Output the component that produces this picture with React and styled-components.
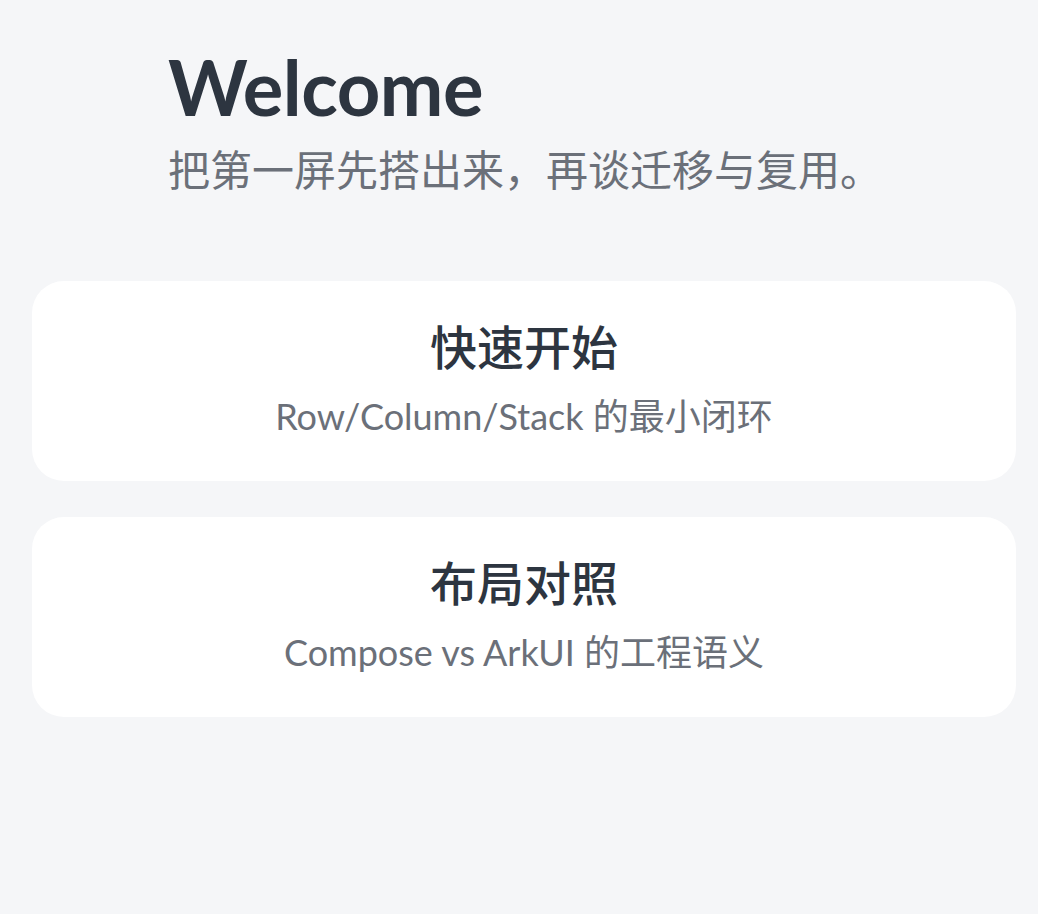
import React from 'react'
import styled, { createGlobalStyle } from 'styled-components'

const GlobalStyle = createGlobalStyle`
  html, body {
    margin: 0;
    padding: 0;
    background: #f5f6f8;
  }
  body {
    font-family: "Lato", "Noto Sans CJK SC", sans-serif;
  }
`

const Page = styled.div`
  min-height: 914px;
  box-sizing: border-box;
  background: #f5f6f8;
  padding: 40px 22px 0 32px;
  display: flex;
  flex-direction: column;
`

const Header = styled.header`
  padding-left: 136px;
  display: flex;
  flex-direction: column;
`

const Title = styled.h1`
  margin: 0;
  font-family: "Lato", sans-serif;
  font-weight: 700;
  font-size: 76px;
  line-height: 94px;
  color: #2d3540;
  letter-spacing: -0.5px;
`

const Subtitle = styled.p`
  margin: 6px 0 0;
  font-family: "Noto Sans CJK SC", sans-serif;
  font-size: 42px;
  line-height: 56px;
  color: #6b7079;
`

const CardList = styled.div`
  margin-top: 85px;
  display: flex;
  flex-direction: column;
  gap: 36px;
`

const Card = styled.section`
  height: 200px;
  box-sizing: border-box;
  padding-bottom: 8px;
  border-radius: 32px;
  background: #ffffff;
  display: flex;
  flex-direction: column;
  align-items: center;
  justify-content: center;
`

const CardTitle = styled.h2`
  margin: 0;
  font-family: "Noto Sans CJK SC", sans-serif;
  font-weight: 500;
  font-size: 47px;
  line-height: 60px;
  color: #2d3540;
`

const CardText = styled.p`
  margin: 18px 0 0;
  font-family: "Lato", "Noto Sans CJK SC", sans-serif;
  font-size: 36px;
  line-height: 46px;
  color: #6b7079;
`

const cards = [
  { title: '快速开始', text: 'Row/Column/Stack 的最小闭环' },
  { title: '布局对照', text: 'Compose vs ArkUI 的工程语义' },
]

const App = () => (
  <>
    <GlobalStyle />
    <Page>
      <Header>
        <Title>Welcome</Title>
        <Subtitle>把第一屏先搭出来，再谈迁移与复用。</Subtitle>
      </Header>
      <CardList>
        {cards.map(c => (
          <Card key={c.title}>
            <CardTitle>{c.title}</CardTitle>
            <CardText>{c.text}</CardText>
          </Card>
        ))}
      </CardList>
    </Page>
  </>
)

export default App
